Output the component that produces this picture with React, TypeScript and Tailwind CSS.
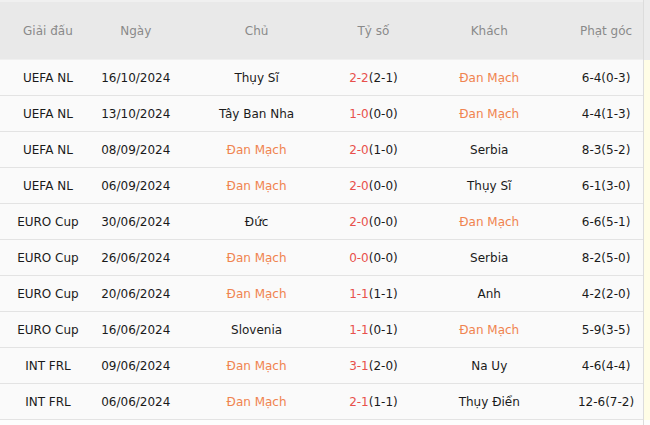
import React from "react";

type Row = {
  league: string;
  date: string;
  home: string;
  score: string;
  ht: string;
  away: string;
  corner: string;
};

const rows: Row[] = [
  { league: "UEFA NL", date: "16/10/2024", home: "Thụy Sĩ", score: "2-2", ht: "(2-1)", away: "Đan Mạch", corner: "6-4(0-3)" },
  { league: "UEFA NL", date: "13/10/2024", home: "Tây Ban Nha", score: "1-0", ht: "(0-0)", away: "Đan Mạch", corner: "4-4(1-3)" },
  { league: "UEFA NL", date: "08/09/2024", home: "Đan Mạch", score: "2-0", ht: "(1-0)", away: "Serbia", corner: "8-3(5-2)" },
  { league: "UEFA NL", date: "06/09/2024", home: "Đan Mạch", score: "2-0", ht: "(0-0)", away: "Thụy Sĩ", corner: "6-1(3-0)" },
  { league: "EURO Cup", date: "30/06/2024", home: "Đức", score: "2-0", ht: "(0-0)", away: "Đan Mạch", corner: "6-6(5-1)" },
  { league: "EURO Cup", date: "26/06/2024", home: "Đan Mạch", score: "0-0", ht: "(0-0)", away: "Serbia", corner: "8-2(5-0)" },
  { league: "EURO Cup", date: "20/06/2024", home: "Đan Mạch", score: "1-1", ht: "(1-1)", away: "Anh", corner: "4-2(2-0)" },
  { league: "EURO Cup", date: "16/06/2024", home: "Slovenia", score: "1-1", ht: "(0-1)", away: "Đan Mạch", corner: "5-9(3-5)" },
  { league: "INT FRL", date: "09/06/2024", home: "Đan Mạch", score: "3-1", ht: "(2-0)", away: "Na Uy", corner: "4-6(4-4)" },
  { league: "INT FRL", date: "06/06/2024", home: "Đan Mạch", score: "2-1", ht: "(1-1)", away: "Thụy Điển", corner: "12-6(7-2)" },
];

const team = (name: string) =>
  name === "Đan Mạch" ? (
    <span className="text-[#f0834f]">{name}</span>
  ) : (
    <span className="text-[#1a1a1a]">{name}</span>
  );

export default function App() {
  return (
    <div
      className="w-[650px] h-[425px] bg-[#fdfdfd] flex overflow-hidden text-[12px]"
      style={{ fontFamily: '"DejaVu Sans", Verdana, sans-serif' }}
    >
      <div className="w-[644px] flex flex-col border-r border-[#dcdcdc]">
        <div className="h-[60px] shrink-0 bg-[#e9e9e9] border-t-2 border-[#f0f0f0] flex items-center text-[#8a8a8a] border-b border-[#dddddd]">
          <div className="w-[96px] text-center">Giải đấu</div>
          <div className="w-[80px] text-center">Ngày</div>
          <div className="w-[162px] text-center">Chủ</div>
          <div className="w-[72px] text-center">Tỷ số</div>
          <div className="w-[160px] text-center">Khách</div>
          <div className="w-[74px] text-center">Phạt góc</div>
        </div>
        {rows.map((r, i) => (
          <div
            key={i}
            className="h-[36px] shrink-0 bg-[#fafafa] border-b border-[#e3e3e3] flex items-center text-[#1a1a1a]"
          >
            <div className="w-[96px] text-center">{r.league}</div>
            <div className="w-[80px] text-center">{r.date}</div>
            <div className="w-[162px] text-center">{team(r.home)}</div>
            <div className="w-[72px] text-center whitespace-nowrap">
              <span className="text-[#e8504c]">{r.score}</span>
              <span className="text-[#1a1a1a]">{r.ht}</span>
            </div>
            <div className="w-[160px] text-center">{team(r.away)}</div>
            <div className="w-[74px] text-center whitespace-nowrap">{r.corner}</div>
          </div>
        ))}
      </div>
      <div className="flex-1 flex flex-col">
        <div className="h-[60px] bg-[#ececec]" />
        <div className="h-[360px] bg-[#fffde6]" />
      </div>
    </div>
  );
}
